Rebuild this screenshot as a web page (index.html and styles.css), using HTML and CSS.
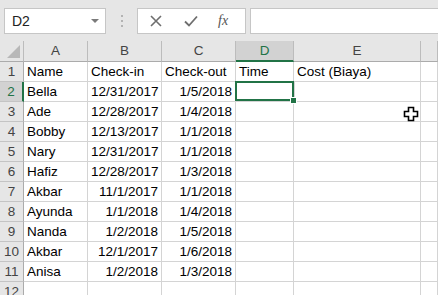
FILE: index.html
```html
<!DOCTYPE html>
<html lang="en">
<head>
  <meta charset="UTF-8" />
  <title>Hotel Sheet</title>
  <link rel="stylesheet" href="styles.css">
</head>
<body>
  <div class="app">
    <div class="toolbar">
      <div class="namebox">
        <span>D2</span>
        <svg class="drop" width="8" height="5" viewBox="0 0 8 5"><path d="M0 0h8L4 4z" fill="#7a7a7a"/></svg>
      </div>
      <div class="dots"><i></i><i></i><i></i></div>
      <div class="fbuttons">
        <svg width="12" height="12" viewBox="0 0 12 12"><path d="M1 1L11 11M11 1L1 11" stroke="#6e6e6e" stroke-width="1.6"/></svg>
        <svg width="14" height="12" viewBox="0 0 14 12"><path d="M1 6.5L5 10.5L13 1.5" stroke="#6e6e6e" stroke-width="1.8" fill="none"/></svg>
        <span class="fx">fx</span>
      </div>
      <div class="formula"></div>
    </div>

    <div class="grid" id="grid"></div>

    <svg class="cursor" width="16" height="16" viewBox="0 0 16 16">
      <path d="M5.5 1.5h5v4h4v5h-4v4h-5v-4h-4v-5h4z" fill="#fff" stroke="#000" stroke-width="1.6"/>
    </svg>
  </div>

<script>
var rows = [
  ["Name", "Check-in", "Check-out", "Time", "Cost (Biaya)"],
  ["Bella", "12/31/2017", "1/5/2018"],
  ["Ade", "12/28/2017", "1/4/2018"],
  ["Bobby", "12/13/2017", "1/1/2018"],
  ["Nary", "12/31/2017", "1/1/2018"],
  ["Hafiz", "12/28/2017", "1/3/2018"],
  ["Akbar", "11/1/2017", "1/1/2018"],
  ["Ayunda", "1/1/2018", "1/4/2018"],
  ["Nanda", "1/2/2018", "1/5/2018"],
  ["Akbar", "12/1/2017", "1/6/2018"],
  ["Anisa", "1/2/2018", "1/3/2018"],
  []
];
var cols = ["A", "B", "C", "D", "E", ""];

var html = '<div class="corner"><span></span></div>';
cols.forEach(function (c) {
  html += '<div class="colhead' + (c == "D" ? " sel" : "") + '">' + c + '</div>';
});
rows.forEach(function (r, i) {
  html += '<div class="rowhead' + (i == 1 ? " sel" : "") + '">' + (i + 1) + '</div>';
  for (var j = 0; j < 6; j++) {
    var v = r[j] || "";
    var num = i > 0 && (j == 1 || j == 2);
    var cls = "cell" + (num ? " num" : "") + (i == 1 && j == 3 ? " active" : "");
    html += '<div class="' + cls + '">' + v + '</div>';
  }
});
document.getElementById("grid").innerHTML = html;
</script>
</body>
</html>
```

FILE: styles.css
```css
body {
  margin: 0;
  background: #fff;
  font-family: "Liberation Sans", Arial, sans-serif;
  overflow: hidden;
}
.app {
  position: relative;
  width: 438px;
  height: 295px;
  overflow: hidden;
}
.toolbar {
  display: flex;
  align-items: center;
  height: 41px;
  background: #e6e6e6;
  padding-left: 4px;
  box-sizing: border-box;
}
.namebox {
  width: 102px;
  height: 26px;
  box-sizing: border-box;
  background: #fff;
  border: 1px solid #c6c6c6;
  display: flex;
  align-items: center;
  justify-content: space-between;
  padding: 0 6px 0 7px;
  font-size: 14px;
  color: #222;
}
.drop {
  margin-top: 1px;
}
.dots {
  width: 31px;
  display: flex;
  flex-direction: column;
  align-items: center;
  gap: 3px;
}
.dots i {
  width: 2px;
  height: 2px;
  background: #b3b3b3;
}
.fbuttons {
  width: 109px;
  height: 26px;
  box-sizing: border-box;
  background: #fff;
  border: 1px solid #c6c6c6;
  display: flex;
  align-items: center;
  padding-left: 12px;
  gap: 22px;
}
.fx {
  font-family: "Liberation Serif", serif;
  font-style: italic;
  font-size: 14px;
  color: #555;
  margin-left: -2px;
}
.formula {
  flex: 1;
  height: 26px;
  margin-left: 4px;
  box-sizing: border-box;
  background: #fff;
  border: 1px solid #c6c6c6;
  border-right: none;
}
.grid {
  display: grid;
  grid-template-columns: 24px 64px 74px 74px 58px 127px 1fr;
  grid-template-rows: 21px;
  grid-auto-rows: 20px;
  font-size: 13.5px;
  color: #000;
}
.grid > div {
  box-sizing: border-box;
  border-right: 1px solid #d4d4d4;
  border-bottom: 1px solid #d4d4d4;
  line-height: 19px;
  white-space: nowrap;
  overflow: hidden;
}
.grid .corner,
.grid .colhead,
.grid .rowhead {
  background: #e6e6e6;
  color: #444;
  text-align: center;
}
.grid .colhead,
.grid .corner {
  border-right-color: #bcbcbc;
  border-bottom-color: #ababab;
  line-height: 20px;
}
.grid .rowhead {
  border-right-color: #ababab;
  border-bottom-color: #c4c4c4;
}
.corner {
  position: relative;
}
.corner span {
  position: absolute;
  right: 3px;
  bottom: 3px;
  width: 0;
  height: 0;
  border-left: 13px solid transparent;
  border-bottom: 13px solid #b8b8b8;
}
.grid .colhead.sel {
  background: #d2d2d2;
  color: #217346;
  border-bottom: 2px solid #217346;
}
.grid .rowhead.sel {
  background: #d2d2d2;
  color: #217346;
  border-right: 2px solid #217346;
}
.cell {
  padding: 0 3px;
}
.cell.num {
  text-align: right;
}
.grid .cell.active {
  position: relative;
  overflow: visible;
  box-shadow: inset 0 0 0 2px #217346;
  margin: -1px 0 0 -1px;
  width: calc(100% + 2px);
  height: 21px;
}
.cell.active::after {
  content: "";
  position: absolute;
  right: -3px;
  bottom: -3px;
  width: 5px;
  height: 5px;
  background: #217346;
  border: 1px solid #fff;
}
.cursor {
  position: absolute;
  left: 403px;
  top: 106px;
}
```
